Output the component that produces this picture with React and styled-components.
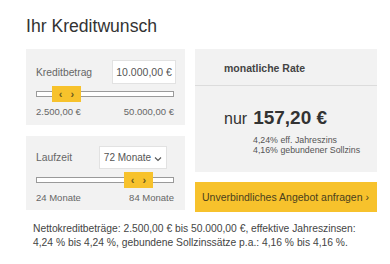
import React from "react";
import styled, { createGlobalStyle } from "styled-components";

const Global = createGlobalStyle`
  html, body { margin: 0; padding: 0; background: #fff; }
  body { font-family: "Liberation Sans", Arial, sans-serif; color: #333; }
`;

const Page = styled.div`
  width: 390px;
  height: 264px;
  padding: 16px 0 0 26px;
  box-sizing: border-box;
`;

const Title = styled.h1`
  margin: 0;
  font-size: 17.6px;
  line-height: 21px;
  font-weight: normal;
  color: #333;
`;

const Grid = styled.div`
  display: grid;
  grid-template-columns: 159px 182px;
  column-gap: 10px;
  margin-top: 12px;
`;

const Column = styled.div`
  display: flex;
  flex-direction: column;
  gap: ${(p) => p.$gap}px;
`;

const Panel = styled.div`
  background: #f2f2f2;
  height: ${(p) => p.$h}px;
  box-sizing: border-box;
  padding: ${(p) => p.$pt}px ${(p) => p.$pr}px 0 10px;
`;

const Row = styled.div`
  display: flex;
  align-items: center;
  justify-content: space-between;
  height: ${(p) => p.$h}px;
`;

const Label = styled.span`
  font-size: 10.3px;
  color: #666;
`;

const ValueBox = styled.div`
  background: #fff;
  border: 1px solid #e2e2e2;
  box-sizing: border-box;
  width: ${(p) => p.$w}px;
  height: 100%;
  display: flex;
  align-items: center;
  justify-content: center;
  gap: 3px;
  font-size: ${(p) => p.$fs}px;
  color: #555;
`;

const Slider = styled.div`
  position: relative;
  height: 16px;
  margin: ${(p) => p.$mt}px ${(p) => p.$mr}px 0 0;
  display: flex;
  align-items: center;
`;

const Track = styled.div`
  flex: 1;
  height: 6px;
  box-sizing: border-box;
  background: #fff;
  border: 1px solid #9a9a9a;
`;

const Thumb = styled.div`
  position: absolute;
  top: 0;
  width: 29px;
  height: 16px;
  background: #f7c22c;
  display: flex;
  align-items: center;
  justify-content: center;
  gap: 8px;
  font-size: 11px;
  font-weight: bold;
  color: #6b5a1c;
  line-height: 1;
`;

const Range = styled.div`
  display: flex;
  justify-content: space-between;
  margin: ${(p) => p.$mt}px ${(p) => p.$mr}px 0 0;
  font-size: 9.5px;
  color: #666;
`;

const RatePanel = styled.div`
  background: #f2f2f2;
  height: 123px;
  display: flex;
  flex-direction: column;
`;

const RateHeader = styled.div`
  height: 37px;
  box-sizing: border-box;
  border-bottom: 1px solid #dcdcdc;
  padding: 13px 0 0 29px;
  font-size: 10.5px;
  font-weight: bold;
  color: #444;
`;

const RateBody = styled.div`
  padding: 21px 0 0 29px;
`;

const Amount = styled.div`
  display: flex;
  align-items: baseline;
  gap: 6px;
  color: #333;
  line-height: 22px;
`;

const Nur = styled.span`
  font-size: 16px;
`;

const Big = styled.span`
  font-size: 19px;
  font-weight: bold;
`;

const RateInfo = styled.div`
  margin: 5px 0 0 58px;
  font-size: 8.8px;
  line-height: 10px;
  color: #555;
`;

const CTA = styled.button`
  margin-top: 10px;
  height: 30px;
  border: none;
  background: #f7c22c;
  text-align: left;
  padding: 0 0 0 7px;
  font-family: "Liberation Sans", Arial, sans-serif;
  font-size: 10.5px;
  color: #4a3f1c;
  cursor: pointer;
`;

const Note = styled.p`
  margin: 10px 0 0 7px;
  font-size: 10.3px;
  line-height: 14px;
  color: #444;
  width: 330px;
`;

const Chevron = () => (
  <svg width="8" height="6" viewBox="0 0 8 6" style={{ marginTop: 3 }}>
    <path d="M1 1.5 L4 4.5 L7 1.5" fill="none" stroke="#555" strokeWidth="1.1" />
  </svg>
);

export default function App() {
  return (
    <>
      <Global />
      <Page>
        <Title>Ihr Kreditwunsch</Title>
        <Grid>
          <Column $gap={11}>
            <Panel $h={76} $pt={11} $pr={9}>
              <Row $h={24}>
                <Label>Kreditbetrag</Label>
                <ValueBox $w={64} $fs={10.5}>10.000,00 €</ValueBox>
              </Row>
              <Slider $mt={2} $mr={2}>
                <Track />
                <Thumb style={{ left: 16 }}>
                  <span>‹</span>
                  <span>›</span>
                </Thumb>
              </Slider>
              <Range $mt={4} $mr={2}>
                <span>2.500,00 €</span>
                <span>50.000,00 €</span>
              </Range>
            </Panel>
            <Panel $h={74} $pt={10} $pr={18}>
              <Row $h={23}>
                <Label>Laufzeit</Label>
                <ValueBox $w={68} $fs={10}>
                  72 Monate <Chevron />
                </ValueBox>
              </Row>
              <Slider $mt={3} $mr={-7}>
                <Track />
                <Thumb style={{ left: 88 }}>
                  <span>‹</span>
                  <span>›</span>
                </Thumb>
              </Slider>
              <Range $mt={4} $mr={-7}>
                <span>24 Monate</span>
                <span>84 Monate</span>
              </Range>
            </Panel>
          </Column>
          <Column $gap={0}>
            <RatePanel>
              <RateHeader>monatliche Rate</RateHeader>
              <RateBody>
                <Amount>
                  <Nur>nur</Nur>
                  <Big>157,20 €</Big>
                </Amount>
              </RateBody>
              <RateInfo>
                4,24% eff. Jahreszins
                <br />
                4,16% gebundener Sollzins
              </RateInfo>
            </RatePanel>
            <CTA>Unverbindliches Angebot anfragen ›</CTA>
          </Column>
        </Grid>
        <Note>
          Nettokreditbeträge: 2.500,00 € bis 50.000,00 €, effektive Jahreszinsen:
          4,24 % bis 4,24 %, gebundene Sollzinssätze p.a.: 4,16 % bis 4,16 %.
        </Note>
      </Page>
    </>
  );
}
